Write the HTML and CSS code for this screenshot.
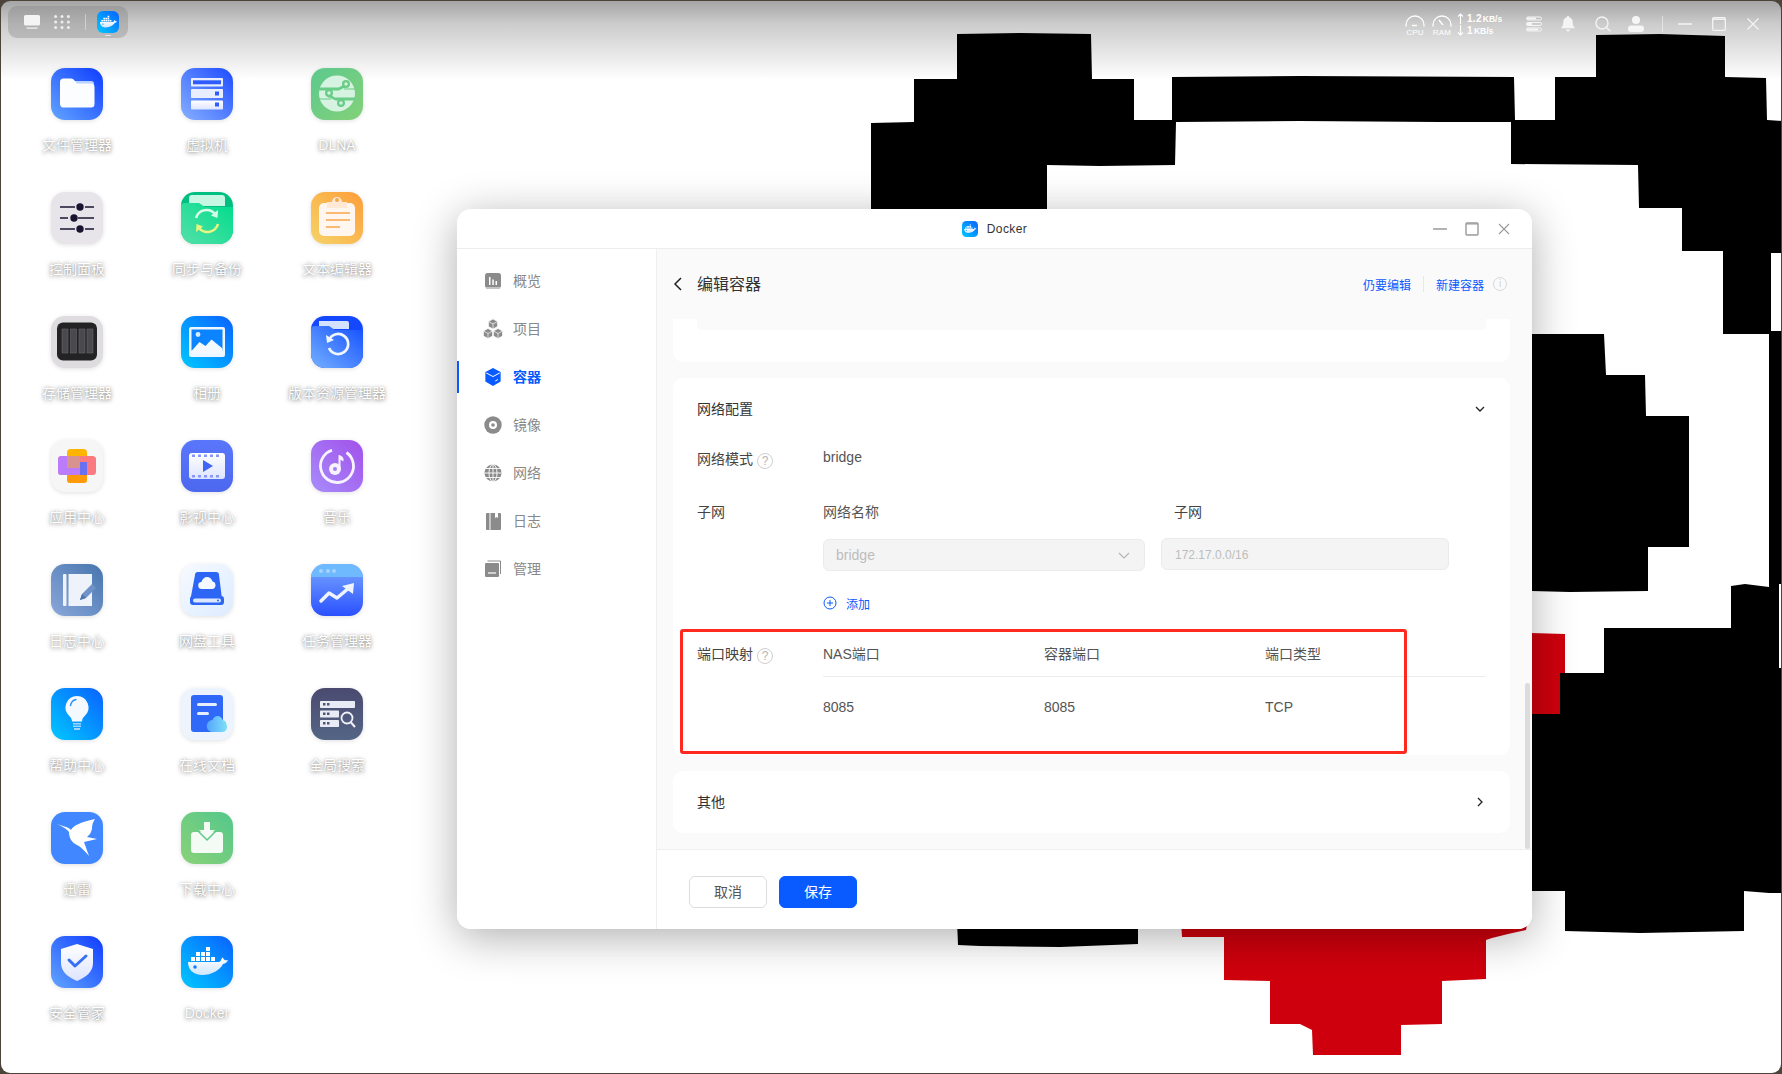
FILE: index.html
```html
<!DOCTYPE html>
<html lang="zh-CN">
<head>
<meta charset="utf-8">
<title>Docker</title>
<link rel="stylesheet" href="styles.css">
</head>
<body>
<svg class="defs" aria-hidden="true">
  <defs>
    <linearGradient id="gFile" x1="0" y1="1" x2="1" y2="0"><stop offset="0" stop-color="#62a5ff"/><stop offset="1" stop-color="#0f3cff"/></linearGradient>
    <linearGradient id="gVm" x1="0" y1="1" x2="1" y2="0"><stop offset="0" stop-color="#86b0ff"/><stop offset="1" stop-color="#1e4cff"/></linearGradient>
    <linearGradient id="gGreen" x1="0" y1="0" x2="1" y2="1"><stop offset="0" stop-color="#5cc98e"/><stop offset="1" stop-color="#84d178"/></linearGradient>
    <linearGradient id="gGreen2" x1="1" y1="0" x2="0" y2="1"><stop offset="0" stop-color="#54c78c"/><stop offset="1" stop-color="#8ad277"/></linearGradient>
    <linearGradient id="gSync" x1="0" y1="1" x2="1" y2="0"><stop offset="0" stop-color="#55e0a8"/><stop offset="1" stop-color="#00dc8c"/></linearGradient>
    <linearGradient id="gOrange" x1="0" y1="1" x2="1" y2="0"><stop offset="0" stop-color="#f5d468"/><stop offset="1" stop-color="#fd9e3a"/></linearGradient>
    <linearGradient id="gPhoto" x1="0" y1="1" x2="1" y2="0"><stop offset="0" stop-color="#00c8ff"/><stop offset="1" stop-color="#0a62ff"/></linearGradient>
    <linearGradient id="gVer" x1="0" y1="1" x2="1" y2="0"><stop offset="0" stop-color="#74b0ff"/><stop offset="1" stop-color="#1650ff"/></linearGradient>
    <linearGradient id="gMovie" x1="0" y1="0" x2="0" y2="1"><stop offset="0" stop-color="#5a76fb"/><stop offset="1" stop-color="#4c68ef"/></linearGradient>
    <linearGradient id="gMusic" x1="1" y1="0" x2="0" y2="1"><stop offset="0" stop-color="#a251ea"/><stop offset="1" stop-color="#a78cfb"/></linearGradient>
    <linearGradient id="gLog" x1="0" y1="1" x2="1" y2="0"><stop offset="0" stop-color="#8aa7da"/><stop offset="1" stop-color="#4775ae"/></linearGradient>
    <linearGradient id="gDisk" x1="0" y1="0" x2="1" y2="1"><stop offset="0" stop-color="#f7faff"/><stop offset="1" stop-color="#dcecff"/></linearGradient>
    <linearGradient id="gTask" x1="0" y1="0" x2="0" y2="1"><stop offset="0" stop-color="#79a8ff"/><stop offset="1" stop-color="#2a50ff"/></linearGradient>
    <linearGradient id="gSearch" x1="0" y1="0" x2="0" y2="1"><stop offset="0" stop-color="#4b4a70"/><stop offset="1" stop-color="#546585"/></linearGradient>
    <linearGradient id="gPaper" x1="0" y1="0" x2="0" y2="1"><stop offset="0" stop-color="#ffffff"/><stop offset="1" stop-color="#dde4ff"/></linearGradient>
    <linearGradient id="gWhale" x1="0" y1="0" x2="0" y2="1"><stop offset="0" stop-color="#ffffff"/><stop offset="1" stop-color="#cfe6ff"/></linearGradient>
    <linearGradient id="gCloud" x1="0" y1="0" x2="1" y2="0"><stop offset="0" stop-color="#56a6ff"/><stop offset="1" stop-color="#7fe0f5"/></linearGradient>
    <symbol id="docker" viewBox="0 0 52 52">
      <rect width="52" height="52" rx="14" fill="url(#gPhoto)"/>
      <path d="M7 26h30c1 0 2-.4 2.600-1 .6-2 1.400-3.400 2.400-3.600.4 1.300 1 2.200 2 2.600 1 .3 2 .2 3 0-.8 2.400-2.600 3.700-5 4C39 34 31 39 21 39 13 39 7 34 7 26z" fill="url(#gWhale)"/>
      <circle cx="14" cy="31" r="1.700" fill="#0a7bff"/>
      <path d="M10 21h4v4h-4zM15 21h4v4h-4zM20 21h4v4h-4zM25 21h4v4h-4zM30 21h4v4h-4zM15 16h4v4h-4zM20 16h4v4h-4zM25 16h4v4h-4zM25 11h4v4h-4z" fill="#fff"/>
    </symbol>
  </defs>
</svg>

<main class="desktop">
  <svg class="wallpaper" viewBox="0 0 1782 1074" aria-hidden="true">
    <path class="ink" d="M957 34 1020 33 1091 34 1092 79 1134 79 1134 120 1172 120 1172 77 1300 76 1514 77 1515 120 1555 120 1555 77 1596 77 1596 35 1660 34 1725 36 1725 77 1766 78 1767 120 1782 121 1782 893 1769 893 1769 334 1723 334 1723 251 1682 251 1682 208 1639 208 1638 165 1511 164 1511 122 1440 122 1300 121 1176 122 1175 165 1100 166 1047 165 1047 300 871 300 871 123 914 122 914 79 957 79Z"/>
    <path class="ink" d="M1500 334 1604 334 1606 375 1645 375 1646 416 1689 416 1689 547 1648 547 1648 591 1570 592 1500 590Z"/>
    <path class="ink" d="M1604 630 1604 628 1731 628 1731 586 1745 584 1769 587 1769 893 1744 891 1744 931 1640 933 1565 931 1565 891 1500 891 1500 673 1565 673 1604 673Z"/>
    <path class="paper" d="M1771 253H1782V331H1771Z"/>
    <path class="paper" d="M1779 584H1782V668H1779Z"/>
    <path class="red" d="M1500 632 1565 634 1565 673 1560 673 1560 714 1500 714Z"/>
    <path class="ink" d="M957 920H1138V944L1060 947 980 946 958 945Z"/>
    <path class="red" d="M1181 920H1528L1526 930 1508 934 1492 938 1486 940 1486 979 1442 981 1442 1024 1401 1025 1401 1055H1313L1312 1030 1300 1024H1270V981L1224 980 1224 937 1182 937Z"/>
  </svg>
  <div class="shade"></div>

  <header class="topbar">
    <nav class="launcher">
      <svg class="launch-ico" viewBox="0 0 16 14"><rect x="0" y="0" width="16" height="10.500" rx="1.500" fill="#f4f4f4"/><rect x="2.500" y="12.500" width="11" height="1.200" fill="#f4f4f4"/></svg>
      <svg class="launch-ico launch-dots" viewBox="0 0 16 14"><g fill="#ededed"><circle cx="1.600" cy="1.600" r="1.500"/><circle cx="8" cy="1.600" r="1.500"/><circle cx="14.400" cy="1.600" r="1.500"/><circle cx="1.600" cy="7" r="1.500"/><circle cx="8" cy="7" r="1.500"/><circle cx="14.400" cy="7" r="1.500"/><circle cx="1.600" cy="12.400" r="1.500"/><circle cx="8" cy="12.400" r="1.500"/><circle cx="14.400" cy="12.400" r="1.500"/></g></svg>
      <span class="launch-sep"></span>
      <span class="launch-app"><svg class="launch-docker"><use href="#docker"/></svg><i class="launch-dash"></i></span>
    </nav>
    <div class="tray">
      <div class="gauge">
        <svg viewBox="0 0 20 12"><path d="M1 11.500V10a9 9 0 0 1 18 0v1.500" fill="none" stroke="#fff" stroke-width="1.300"/><path d="M7 10.500h5" stroke="#fff" stroke-width="1.400"/></svg>
        <span>CPU</span>
      </div>
      <div class="gauge gauge-ram">
        <svg viewBox="0 0 20 12"><path d="M1 11.500V10a9 9 0 0 1 18 0v1.500" fill="none" stroke="#fff" stroke-width="1.300"/><path d="M7 5l4 5" stroke="#fff" stroke-width="1.400"/></svg>
        <span>RAM</span>
      </div>
      <div class="net">
        <div class="net-row"><svg class="net-arrow" viewBox="0 0 7 11"><path d="M3.500 11V1M1 3.500l2.500-2.500L6 3.500" fill="none" stroke="#fff" stroke-width="1.100"/></svg><b>1.2</b><small>KB/s</small></div>
        <div class="net-row"><svg class="net-arrow" viewBox="0 0 7 11"><path d="M3.500 0v10M1 7.500l2.500 2.500L6 7.500" fill="none" stroke="#fff" stroke-width="1.100"/></svg><b>1</b><small>KB/s</small></div>
      </div>
      <svg class="tray-ico t-list" viewBox="0 0 16 16"><g fill="none" stroke="#f4f4f4" stroke-width="1"><rect x=".5" y="1" width="15" height="3" rx="1.500"/><rect x=".5" y="6.500" width="15" height="3" rx="1.500"/><rect x=".5" y="12" width="15" height="3" rx="1.500"/></g><path d="M1 1.500h9v2H1zM1 7h5v2H1zM1 12.500h11v2H1z" fill="#f4f4f4"/></svg>
      <svg class="tray-ico t-bell" viewBox="0 0 14 16"><path d="M7 0c.7 0 1.100.5 1.200 1.200C10.500 1.800 11.700 3.700 11.700 6.200c0 3 .8 4.500 2.300 6H0c1.500-1.500 2.300-3 2.300-6C2.300 3.700 3.500 1.800 5.800 1.200 5.900.5 6.300 0 7 0zM5 13.500h4c-.2 1.200-1 2-2 2s-1.800-.8-2-2z" fill="#f4f4f4"/></svg>
      <svg class="tray-ico t-search" viewBox="0 0 16 16"><circle cx="7" cy="7" r="6" fill="none" stroke="#f4f4f4" stroke-width="1.400"/><path d="M11.500 11.500l3.800 3.800" stroke="#f4f4f4" stroke-width="1.400"/></svg>
      <svg class="tray-ico t-user" viewBox="0 0 16 16"><circle cx="8" cy="4" r="4" fill="#f6f6f6"/><rect x="0" y="9.500" width="16" height="6.500" rx="3.200" fill="#f6f6f6"/></svg>
      <span class="tray-sep"></span>
      <svg class="tray-ico t-min" viewBox="0 0 14 14"><path d="M0 7h14" stroke="#f4f4f4" stroke-width="1.500"/></svg>
      <svg class="tray-ico t-max" viewBox="0 0 14 14"><rect x=".7" y=".7" width="12.600" height="12.600" rx="1" fill="none" stroke="#f4f4f4" stroke-width="1.300"/><path d="M.7 2.200h12.600" stroke="#f4f4f4" stroke-width="1.500"/></svg>
      <svg class="tray-ico t-close" viewBox="0 0 12 12"><path d="M.5.500l11 11M11.500.500l-11 11" stroke="#f4f4f4" stroke-width="1.200"/></svg>
    </div>
  </header>

  <section class="apps">
    <div class="app">
      <svg class="app-ico" viewBox="0 0 52 52"><rect width="52" height="52" rx="14" fill="url(#gFile)"/><path d="M24 13h16a3 3 0 0 1 3 3v6H24z" fill="#b9d2ff"/><path d="M9 14a3.500 3.500 0 0 1 3.500-3.500h7.500c1.500 0 2.500.8 3.500 2l2.500 3h14a3.500 3.500 0 0 1 3.500 3.500v17a3.500 3.500 0 0 1-3.500 3.500h-27A3.500 3.500 0 0 1 9 36z" fill="#fbfdff"/></svg>
      <span class="app-name">文件管理器</span>
    </div>
    <div class="app">
      <svg class="app-ico" viewBox="0 0 52 52"><rect width="52" height="52" rx="14" fill="url(#gVm)"/><rect x="10" y="10" width="32" height="8.500" rx=".8" fill="#e9eeff"/><rect x="12" y="12.300" width="28" height="4" fill="#2f5cff"/><rect x="10" y="21" width="32" height="9" rx=".8" fill="#e9eeff"/><rect x="34" y="23.500" width="4" height="4" fill="#2f5cff"/><rect x="10" y="32.500" width="32" height="9" rx=".8" fill="url(#gPaper)"/><rect x="34" y="34.500" width="4" height="4" fill="#2f5cff"/></svg>
      <span class="app-name">虚拟机</span>
    </div>
    <div class="app">
      <svg class="app-ico" viewBox="0 0 52 52"><rect width="52" height="52" rx="14" fill="url(#gGreen)"/><circle cx="26" cy="25.500" r="18" fill="#d6f2e0"/><path d="M8 21h19c3 0 4-3 8-3M44 31H25c-3 0-4-3-7-3 0 0-1-3 1-3" fill="none" stroke="#69cc87" stroke-width="2.800"/><path d="M8 31h12M33 21h11" stroke="#69cc87" stroke-width="1.200"/><circle cx="35" cy="16" r="4" fill="#69cc87"/><circle cx="18" cy="25" r="4" fill="#69cc87"/><circle cx="30" cy="35" r="4" fill="#69cc87"/><circle cx="35" cy="16" r="1.700" fill="#d6f2e0"/><circle cx="18" cy="25" r="1.700" fill="#d6f2e0"/><circle cx="30" cy="35" r="1.700" fill="#d6f2e0"/></svg>
      <span class="app-name">DLNA</span>
    </div>

    <div class="app">
      <svg class="app-ico" viewBox="0 0 52 52"><rect width="52" height="52" rx="14" fill="#e7e5ea"/><g stroke="#1a1430" stroke-width="1.600"><path d="M9 15h15M34 15h9M9 26h8M27 26h16M9 37h15M34 37h9"/></g><g fill="#1a1430"><circle cx="29" cy="15" r="3.700"/><circle cx="23" cy="26" r="3.700"/><circle cx="29" cy="37" r="3.700"/></g></svg>
      <span class="app-name">控制面板</span>
    </div>
    <div class="app">
      <svg class="app-ico" viewBox="0 0 52 52"><rect width="52" height="52" rx="14" fill="#00bf80"/><path d="M8 6a3 3 0 0 1 3-3h30a3 3 0 0 1 3 3v8H8z" fill="#c6f7e2"/><path d="M0 15a4 4 0 0 1 4-4h14l6 4h28v23a14 14 0 0 1-14 14H14A14 14 0 0 1 0 38z" fill="url(#gSync)"/><path d="M15 26a11 11 0 0 1 19-4" fill="none" stroke="#d7fbe9" stroke-width="2.600"/><path d="M37 18l-.5 8-6.500-2.500z" fill="#d7fbe9"/><path d="M37 32a11 11 0 0 1-19 4" fill="none" stroke="#eaf57f" stroke-width="2.600"/><path d="M15 40l.5-8 6.500 2.500z" fill="#eaf57f"/></svg>
      <span class="app-name">同步与备份</span>
    </div>
    <div class="app">
      <svg class="app-ico" viewBox="0 0 52 52"><rect width="52" height="52" rx="14" fill="url(#gOrange)"/><rect x="8" y="11" width="36" height="33" rx="5" fill="#fff7ef"/><path d="M16 6h5a5 5 0 0 1 10 0h5v6H16z" fill="#ffe9d4" transform="translate(0 4)"/><circle cx="26" cy="8" r="2" fill="#f9a64b"/><g stroke="#f9a64b" stroke-width="1.700"><path d="M15 21h24M15 28h24M15 35h14"/></g></svg>
      <span class="app-name">文本编辑器</span>
    </div>

    <div class="app">
      <svg class="app-ico" viewBox="0 0 52 52"><rect width="52" height="52" rx="14" fill="#dedcdf"/><rect x="6" y="6.500" width="40" height="38" rx="6" fill="#232326"/><g fill="#4a4a4e" stroke="#66666a" stroke-width=".6"><rect x="11" y="13" width="6" height="24"/><rect x="19.500" y="13" width="6" height="24"/><rect x="28" y="13" width="6" height="24"/><rect x="36" y="13" width="6" height="24"/></g></svg>
      <span class="app-name">存储管理器</span>
    </div>
    <div class="app">
      <svg class="app-ico" viewBox="0 0 52 52"><rect width="52" height="52" rx="14" fill="url(#gPhoto)"/><rect x="8" y="11" width="36" height="30" rx="2" fill="#eef6ff"/><rect x="10.500" y="13.500" width="31" height="21" fill="#0d84ff"/><circle cx="17" cy="18.500" r="2.400" fill="#dcecff"/><path d="M10.500 35l8-9 6 4 6-6.500 11 9v5h-31z" fill="#f4f9ff"/></svg>
      <span class="app-name">相册</span>
    </div>
    <div class="app">
      <svg class="app-ico" viewBox="0 0 52 52"><rect width="52" height="52" rx="14" fill="#1448ff"/><path d="M8 5h28a2 2 0 0 1 2 2v6H8z" fill="#d5e2ff"/><path d="M0 14a4 4 0 0 1 4-4h14l6 4h28v24a14 14 0 0 1-14 14H14A14 14 0 0 1 0 38z" fill="url(#gVer)"/><path d="M18 24a10 10 0 1 1 0 8" fill="none" stroke="#f2f7ff" stroke-width="2.700"/><path d="M15 19l1 8 7-3z" fill="#f2f7ff"/></svg>
      <span class="app-name">版本资源管理器</span>
    </div>

    <div class="app">
      <svg class="app-ico" viewBox="0 0 52 52"><rect width="52" height="52" rx="14" fill="#f6f6f7"/><rect x="16" y="9" width="20" height="34" rx="3.500" fill="#ffb400"/><rect x="16" y="30" width="20" height="13" rx="3.500" fill="#ff9a0a"/><rect x="7" y="16" width="38" height="19" rx="3.500" fill="#fb7a7f"/><rect x="7" y="16" width="22" height="19" rx="3.500" fill="#ba7cfb"/><rect x="16" y="16" width="13" height="12" fill="#d8938f"/><rect x="29" y="22" width="7" height="13" fill="#6a71f0"/></svg>
      <span class="app-name">应用中心</span>
    </div>
    <div class="app">
      <svg class="app-ico" viewBox="0 0 52 52"><rect width="52" height="52" rx="14" fill="url(#gMovie)"/><rect x="8" y="13" width="36" height="26" rx="3" fill="url(#gPaper)"/><g fill="#8a97f5"><rect x="11" y="14.500" width="3" height="2.500"/><rect x="17" y="14.500" width="3" height="2.500"/><rect x="23" y="14.500" width="3" height="2.500"/><rect x="29" y="14.500" width="3" height="2.500"/><rect x="35" y="14.500" width="3" height="2.500"/><rect x="11" y="35" width="3" height="2.500"/><rect x="17" y="35" width="3" height="2.500"/><rect x="23" y="35" width="3" height="2.500"/><rect x="29" y="35" width="3" height="2.500"/><rect x="35" y="35" width="3" height="2.500"/></g><path d="M22 20l10 6-10 6z" fill="#3f66f5"/></svg>
      <span class="app-name">影视中心</span>
    </div>
    <div class="app">
      <svg class="app-ico" viewBox="0 0 52 52"><rect width="52" height="52" rx="14" fill="url(#gMusic)"/><circle cx="26" cy="26" r="16.500" fill="none" stroke="#f7f2ff" stroke-width="2.800" stroke-dasharray="88 16" transform="rotate(-55 26 26)"/><circle cx="24" cy="29" r="6" fill="#f7f2ff"/><path d="M27.500 29V15c2 0 4 1.500 5 3.500v3c-1.500-1-2.500-1.500-3-1.500v9z" fill="#f7f2ff"/><circle cx="24" cy="29" r="2" fill="#a77df1"/></svg>
      <span class="app-name">音乐</span>
    </div>

    <div class="app">
      <svg class="app-ico" viewBox="0 0 52 52"><rect width="52" height="52" rx="14" fill="url(#gLog)"/><rect x="12" y="10" width="3.500" height="32" rx="1" fill="#eef2fb"/><path d="M17.500 10H41v32H17.500z" fill="#eef2fb"/><path d="M29 36l2-6 10-10 4 4-10 10z" fill="#6f93c8"/><path d="M29 36l2-6 4 4z" fill="#4c74ad"/></svg>
      <span class="app-name">日志中心</span>
    </div>
    <div class="app">
      <svg class="app-ico" viewBox="0 0 52 52"><rect width="52" height="52" rx="14" fill="url(#gDisk)"/><path d="M14 11a3 3 0 0 1 3-3h18a3 3 0 0 1 3 3l3 24H9.500z" fill="#2d66f5"/><rect x="9" y="32" width="34" height="9" rx="3" fill="#2d66f5"/><rect x="12" y="34.500" width="28" height="4" rx="2" fill="#dbe7ff"/><circle cx="37" cy="36.500" r="1" fill="#2d66f5"/><path d="M21 25a3.500 3.500 0 0 1-.5-7c.5-3 3-5 5.500-5s5 2 5.500 4.500a3.800 3.800 0 0 1-.5 7.500z" fill="#f4f8ff"/></svg>
      <span class="app-name">网盘工具</span>
    </div>
    <div class="app">
      <svg class="app-ico" viewBox="0 0 52 52"><rect width="52" height="52" rx="14" fill="url(#gTask)"/><path d="M14 0h24a14 14 0 0 1 14 13H0A14 14 0 0 1 14 0z" fill="#6fb9ff"/><g fill="#a6d3ff"><circle cx="10" cy="7" r="2"/><circle cx="17" cy="7" r="2"/><circle cx="23" cy="7" r="2"/></g><path d="M10 37l8-8 8 5 13-11" fill="none" stroke="#eef3ff" stroke-width="3.500" stroke-linecap="round" stroke-linejoin="round"/><path d="M31 22l12-3-1 11z" fill="#eef3ff"/></svg>
      <span class="app-name">任务管理器</span>
    </div>

    <div class="app">
      <svg class="app-ico" viewBox="0 0 52 52"><rect width="52" height="52" rx="14" fill="url(#gPhoto)"/><path d="M26 8a11.500 11.500 0 0 1 7.500 20.200c-1.500 1.500-2.500 2.800-2.500 5.300H21c0-2.500-1-3.800-2.500-5.300A11.500 11.500 0 0 1 26 8z" fill="#f4f9ff"/><path d="M19.500 17.500c.5-3 2.500-5.300 5.500-6" fill="none" stroke="#2a8cff" stroke-width="1.400" stroke-linecap="round"/><g fill="#9fd4ff"><rect x="22" y="35" width="8" height="1.500"/><rect x="22" y="37.500" width="8" height="1.500"/><rect x="23" y="40" width="6" height="2"/></g></svg>
      <span class="app-name">帮助中心</span>
    </div>
    <div class="app">
      <svg class="app-ico" viewBox="0 0 52 52"><rect width="52" height="52" rx="14" fill="#eef4fe"/><rect x="10" y="7" width="32" height="37" rx="3" fill="#3068f8"/><rect x="16" y="15" width="20" height="3" rx="1.500" fill="#e7efff"/><rect x="16" y="24" width="12" height="3" rx="1.500" fill="#e7efff"/><path d="M32 44a6 6 0 0 1-.5-12c.8-2.500 3-4 5-4 2.500 0 4.500 1.700 5 4a5 5 0 0 1 4 4.500 5 5 0 0 1-5 7.500z" fill="url(#gCloud)"/></svg>
      <span class="app-name">在线文档</span>
    </div>
    <div class="app">
      <svg class="app-ico" viewBox="0 0 52 52"><rect width="52" height="52" rx="14" fill="url(#gSearch)"/><rect x="9" y="13" width="35" height="7" rx=".8" fill="#e9ecf4"/><rect x="9" y="22.500" width="19" height="7" rx=".8" fill="#e9ecf4"/><rect x="9" y="32" width="19" height="7" rx=".8" fill="#e9ecf4"/><g fill="#4e5578"><rect x="12" y="15" width="2.500" height="2.500"/><rect x="16" y="15" width="2.500" height="2.500"/><rect x="12" y="24.500" width="2.500" height="2.500"/><rect x="16" y="24.500" width="2.500" height="2.500"/><rect x="12" y="34" width="2.500" height="2.500"/><rect x="16" y="34" width="2.500" height="2.500"/></g><circle cx="36" cy="30" r="5.500" fill="none" stroke="#f0f2f8" stroke-width="1.800"/><path d="M40 34.500l4 4.500" stroke="#f0f2f8" stroke-width="2"/></svg>
      <span class="app-name">全局搜索</span>
    </div>

    <div class="app">
      <svg class="app-ico" viewBox="0 0 52 52"><rect width="52" height="52" rx="14" fill="#4187ff"/><path d="M6 12l9 3c2 .6 3 1 5 3 2-4 9-8 24-11-2 3-3 6-3 9 0 2-1 4-2 6-1 1-2 2-3 3l10 2-13 3 5 14c-4-5-8-9-12-11-5-2-8-7-8-13-2-3-6-5-12-8z" fill="#fff"/></svg>
      <span class="app-name">迅雷</span>
    </div>
    <div class="app">
      <svg class="app-ico" viewBox="0 0 52 52"><rect width="52" height="52" rx="14" fill="url(#gGreen2)"/><path d="M13 20h9l4 4 4-4h9a3 3 0 0 1 3 3v15a3 3 0 0 1-3 3H13a3 3 0 0 1-3-3V23a3 3 0 0 1 3-3z" fill="#f3fbf4"/><path d="M23 10h6v8h5l-8 8-8-8h5z" fill="#f3fbf4"/><path d="M17 19l9 9 9-9" fill="none" stroke="#5fc98a" stroke-width="1.500"/></svg>
      <span class="app-name">下载中心</span>
    </div>
    <div class="app app-spacer"></div>

    <div class="app">
      <svg class="app-ico" viewBox="0 0 52 52"><rect width="52" height="52" rx="14" fill="url(#gFile)"/><path d="M26 8l16 5v14c0 9-7 14-16 18-9-4-16-9-16-18V13z" fill="url(#gPaper)"/><path d="M18 24l6 6 11-10" fill="none" stroke="#3670f5" stroke-width="3" stroke-linecap="round" stroke-linejoin="round"/></svg>
      <span class="app-name">安全管家</span>
    </div>
    <div class="app">
      <svg class="app-ico"><use href="#docker"/></svg>
      <span class="app-name">Docker</span>
    </div>
  </section>

  <article class="window">
    <header class="win-head">
      <svg class="win-logo"><use href="#docker"/></svg>
      <span class="win-title">Docker</span>
      <div class="win-ctrl">
        <svg viewBox="0 0 14 14"><path d="M0 7h14" stroke="#9a9a9a" stroke-width="1.300"/></svg>
        <svg viewBox="0 0 14 14"><rect x="1" y="1" width="12" height="12" rx="1" fill="none" stroke="#999" stroke-width="1.400"/><path d="M1 2h12" stroke="#999" stroke-width="1"/></svg>
        <svg viewBox="0 0 14 14"><path d="M2 2l10 10M12 2L2 12" stroke="#9a9a9a" stroke-width="1.100"/></svg>
      </div>
    </header>
    <div class="win-body">
      <aside class="side">
        <a class="nav">
          <svg class="nav-ico" viewBox="0 0 18 18"><rect x="1" y="1" width="16" height="15" rx="2.500" fill="#8b8b8b"/><rect x="2" y="15" width="14" height="2" fill="#c4c4c4"/><path d="M5 5h1.500v8H5zM8.300 7.500h1.500V13H8.300zM11.500 9H13v4h-1.500z" fill="#fff"/></svg>
          <span class="nav-text">概览</span>
        </a>
        <a class="nav">
          <svg class="nav-ico nav-ico-wide" viewBox="0 0 20 20"><g fill="#8b8b8b" stroke="#fff" stroke-width=".6"><path d="M10 0l4.500 2.500v5L10 10 5.500 7.500v-5z"/><path d="M5 9.500l4.500 2.500v5L5 19.500.5 17v-5z"/><path d="M15 9.500l4.500 2.500v5L15 19.500 10.500 17v-5z"/></g><path d="M5.500 2.500L10 5l4.500-2.500M10 5v5M.5 12L5 14.500 9.500 12M5 14.500v5M10.500 12l4.500 2.500 4.500-2.500M15 14.500v5" fill="none" stroke="#fff" stroke-width=".7"/></svg>
          <span class="nav-text">项目</span>
        </a>
        <a class="nav nav-on">
          <svg class="nav-ico" viewBox="0 0 18 20"><path d="M9 0l8.500 4.500v10.500L9 20 .5 15V4.500z" fill="#0a5bff"/><path d="M1.500 5.500L9 9.500l7.500-4" fill="none" stroke="#fff" stroke-width="1.100"/><path d="M11.500 14.500l3-1.700" stroke="#fff" stroke-width="1.100"/></svg>
          <span class="nav-text">容器</span>
        </a>
        <a class="nav">
          <svg class="nav-ico" viewBox="0 0 18 18"><circle cx="9" cy="9" r="8.700" fill="#8b8b8b"/><circle cx="9" cy="9" r="4" fill="#fff"/><circle cx="9" cy="9" r="1.800" fill="#8b8b8b"/></svg>
          <span class="nav-text">镜像</span>
        </a>
        <a class="nav">
          <svg class="nav-ico" viewBox="0 0 18 18"><circle cx="9" cy="9" r="8.500" fill="#8b8b8b"/><g fill="none" stroke="#fff" stroke-width=".9"><ellipse cx="9" cy="9" rx="4" ry="8.500"/><path d="M9 .5v17M.5 9h17M2 4.500h14M2 13.500h14"/></g></svg>
          <span class="nav-text">网络</span>
        </a>
        <a class="nav">
          <svg class="nav-ico" viewBox="0 0 18 18"><rect x="2" y="1" width="15" height="17" rx="1" fill="#8b8b8b"/><path d="M6 1v17" stroke="#fff" stroke-width="1"/><path d="M11 1h3v5l-1.500-1L11 6z" fill="#fff"/></svg>
          <span class="nav-text">日志</span>
        </a>
        <a class="nav">
          <svg class="nav-ico" viewBox="0 0 18 18"><rect x="1" y="3" width="14" height="14" rx="1" fill="#8b8b8b"/><path d="M3.500 1h13v13" fill="none" stroke="#8b8b8b" stroke-width="1"/><path d="M4 13h8" stroke="#fff" stroke-width="1.200"/></svg>
          <span class="nav-text">管理</span>
        </a>
      </aside>
      <section class="main">
        <div class="scroller">
          <div class="page-head">
            <svg class="back" viewBox="0 0 10 16"><path d="M8 2L2 8l6 6" fill="none" stroke="#222" stroke-width="1.500"/></svg>
            <h1 class="page-title">编辑容器</h1>
            <div class="head-links">
              <a class="link">仍要编辑</a>
              <i class="link-sep"></i>
              <a class="link">新建容器</a>
              <span class="info">i</span>
            </div>
          </div>

          <div class="card card-stub"><div class="stub-bar"></div></div>

          <div class="card card-net">
            <div class="card-head">
              <span class="lift">网络配置</span>
              <svg class="chev" viewBox="0 0 12 12"><path d="M2 4l4 4 4-4" fill="none" stroke="#222" stroke-width="1.300"/></svg>
            </div>
            <div class="row row-mode">
              <div class="row-label">网络模式 <span class="help">?</span></div>
              <div class="row-value">bridge</div>
            </div>
            <div class="row row-subnet">
              <div class="row-label">子网</div>
              <div class="subnet">
                <div class="subnet-grid">
                  <div class="field-label">网络名称</div>
                  <div class="field-label field-label-2">子网</div>
                  <div class="select">
                    <span>bridge</span>
                    <svg class="chev" viewBox="0 0 12 12"><path d="M1 4l5 5 5-5" fill="none" stroke="#b4b4b4" stroke-width="1.100"/></svg>
                  </div>
                  <div class="input">172.17.0.0/16</div>
                </div>
                <a class="add">
                  <svg class="add-ico" viewBox="0 0 14 14"><circle cx="7" cy="7" r="6" fill="none" stroke="#0a5bff"/><path d="M7 4v6M4 7h6" stroke="#0a5bff"/></svg>
                  <span>添加</span>
                </a>
              </div>
            </div>
            <div class="row row-port">
              <div class="row-label">端口映射 <span class="help">?</span></div>
              <div class="ports">
                <div class="ports-row ports-head"><span>NAS端口</span><span>容器端口</span><span>端口类型</span></div>
                <div class="ports-row"><span>8085</span><span>8085</span><span>TCP</span></div>
              </div>
            </div>
            <div class="annotation"></div>
          </div>

          <div class="card card-other">
            <span class="lift">其他</span>
            <svg class="chev" viewBox="0 0 12 12"><path d="M4 2l4 4-4 4" fill="none" stroke="#222" stroke-width="1.300"/></svg>
          </div>
        </div>
        <div class="scrollbar"></div>
        <footer class="foot">
          <button class="btn">取消</button>
          <button class="btn btn-primary">保存</button>
        </footer>
      </section>
    </div>
  </article>
  <div class="frame"></div>
</main>
</body>
</html>
```

FILE: styles.css
```css
* { box-sizing: border-box; }
html, body { margin: 0; padding: 0; }
body {
  width: 1782px;
  height: 1074px;
  overflow: hidden;
  background: #fff;
  font-family: "Liberation Sans", "Noto Sans CJK SC", sans-serif;
  font-size: 14px;
  color: #333;
}
.defs { position: absolute; width: 0; height: 0; }

.desktop { position: relative; width: 1782px; height: 1074px; overflow: hidden; background: #fff; }
.wallpaper { position: absolute; left: 0; top: 0; width: 1782px; height: 1074px; filter: blur(.5px); }
.ink { fill: #000; }
.paper { fill: #fff; }
.red { fill: #cf000d; }
.shade { position: absolute; left: 0; top: 0; right: 0; height: 80px; background: linear-gradient(rgba(0,0,0,.36), rgba(0,0,0,.2) 30%, rgba(0,0,0,0)); }
.frame { position: absolute; left: 1px; top: 1px; right: 1px; bottom: 1px; border-radius: 9px; box-shadow: 0 0 0 10px #4c4439; pointer-events: none; }

/* top bar */
.topbar { position: relative; height: 48px; display: flex; justify-content: space-between; align-items: flex-start; padding: 6px 23px 0 8px; }
.launcher { width: 120px; height: 32px; border-radius: 9px; background: rgba(120,120,120,.32); display: flex; align-items: center; padding-left: 16px; }
.launch-ico { width: 16px; height: 14px; display: block; }
.launch-dots { margin-left: 14px; }
.launch-sep { width: 1px; height: 16px; background: rgba(255,255,255,.4); margin-left: 15px; }
.launch-app { position: relative; margin-left: 11px; width: 22px; height: 22px; display: block; }
.launch-docker { width: 22px; height: 22px; display: block; }
.launch-dash { position: absolute; left: 8px; bottom: -3px; width: 6px; height: 1px; background: rgba(255,255,255,.6); }

.tray { display: flex; align-items: center; height: 36px; color: #fff; }
.gauge { width: 20px; display: flex; flex-direction: column; align-items: center; margin-top: 4px; }
.gauge svg { width: 20px; height: 12px; display: block; }
.gauge span { font-size: 8px; line-height: 8px; margin-top: 2px; color: #fff; letter-spacing: .2px; }
.gauge-ram { margin-left: 7px; }
.net { width: 59px; margin-left: 5px; margin-top: 1px; }
.net-row { display: flex; align-items: center; height: 12px; line-height: 12px; color: #fff; }
.net-arrow { width: 7px; height: 11px; margin-right: 3px; flex: none; display: block; }
.net-row b { font-size: 10px; letter-spacing: .3px; margin-right: 1px; }
.net-row small { font-size: 8.500px; font-weight: bold; }
.tray-ico { display: block; }
.t-list { width: 16px; height: 16px; margin-left: 10px; }
.t-bell { width: 14px; height: 16px; margin-left: 19px; }
.t-search { width: 16px; height: 16px; margin-left: 20px; }
.t-user { width: 16px; height: 16px; margin-left: 17px; }
.tray-sep { width: 1px; height: 16px; background: rgba(255,255,255,.45); margin-left: 18px; }
.t-min { width: 14px; height: 14px; margin-left: 15px; }
.t-max { width: 14px; height: 14px; margin-left: 20px; }
.t-close { width: 12px; height: 12px; margin-left: 21px; }

/* desktop apps */
.apps { position: relative; display: grid; grid-template-columns: repeat(3, 130px); grid-auto-rows: 124px; margin: 20px 0 0 12px; width: 390px; }
.app { display: flex; flex-direction: column; align-items: center; }
.app-ico { width: 52px; height: 52px; display: block; filter: drop-shadow(0 1px 2px rgba(0,0,0,.12)); }
.app-name { margin-top: 15px; line-height: 20px; font-size: 14px; color: #fff; white-space: nowrap; text-shadow: 0 1px 4px rgba(0,0,0,.5), 0 0 1px rgba(0,0,0,.22); }

/* window */
.window { position: absolute; left: 457px; top: 209px; width: 1075px; height: 720px; background: #fff; border-radius: 14px; box-shadow: 0 8px 44px rgba(0,0,0,.32); display: flex; flex-direction: column; overflow: hidden; }
.win-head { position: relative; height: 40px; flex: none; border-bottom: 1px solid #ededed; display: flex; align-items: center; justify-content: center; }
.win-logo { width: 16px; height: 16px; display: block; margin-right: 9px; }
.win-title { font-size: 12px; color: #333; letter-spacing: .4px; }
.win-ctrl { position: absolute; right: 21px; top: 13px; display: flex; gap: 18px; }
.win-ctrl svg { width: 14px; height: 14px; display: block; }
.win-body { flex: 1; display: flex; min-height: 0; }

.side { width: 200px; flex: none; border-right: 1px solid #efefef; padding-top: 8px; background: #fff; }
.nav { position: relative; height: 48px; display: flex; align-items: center; padding-left: 27px; color: #888; font-size: 14px; }
.nav-ico { width: 18px; height: 18px; margin-right: 11px; flex: none; display: block; }
.nav-ico-wide { width: 20px; height: 20px; margin-left: -1px; margin-right: 10px; }
.nav-text { padding-bottom: 2px; }
.nav-on { color: #0a5bff; font-weight: 500; text-shadow: 0 0 .4px #0a5bff; }
.nav-on::before { content: ""; position: absolute; left: 0; top: 8px; width: 2px; height: 32px; background: #0a5bff; }

.main { position: relative; flex: 1; min-width: 0; display: flex; flex-direction: column; background: #fafafa; }
.scroller { height: 600px; flex: none; padding: 0 22px 0 16px; overflow: hidden; }
.page-head { height: 70px; display: flex; align-items: center; padding: 0 3px 0 0; }
.back { width: 10px; height: 16px; display: block; }
.page-title { margin: 0 0 2px 14px; font-size: 16px; font-weight: 400; color: #333; }
.head-links { margin-left: auto; display: flex; align-items: center; }
.link { font-size: 12px; color: #0a5bff; }
.link-sep { width: 1px; height: 16px; background: #e8e8e8; margin: 0 12px; }
.info { width: 14px; height: 14px; border: 1px solid #d8d8d8; border-radius: 50%; margin-left: 9px; font-size: 10px; line-height: 12px; text-align: center; color: #d0d0d0; font-style: normal; }

.card { background: #fff; border-radius: 10px; }
.card-stub { height: 43px; padding: 0 24px; border-radius: 0 0 10px 10px; }
.stub-bar { height: 11px; background: #fafafa; border-radius: 0 0 4px 4px; }

.card-net { position: relative; height: 377px; margin-top: 16px; padding: 0 24px; }
.card-head { height: 62px; display: flex; align-items: center; justify-content: space-between; color: #333; }
.lift { padding-bottom: 3px; }
.chev { width: 12px; height: 12px; display: block; flex: none; }

.row { display: flex; }
.row-label { width: 126px; flex: none; line-height: 22px; color: #444; display: flex; align-items: center; gap: 3px; height: 22px; }
.help { width: 16px; height: 16px; border: 1px solid #cfcfcf; border-radius: 50%; font-size: 12px; line-height: 14px; text-align: center; color: #b5b5b5; margin-top: 4px; margin-left: 1px; }
.row-mode { margin-top: 8px; height: 53px; }
.row-value { line-height: 22px; margin-top: -2px; color: #555; }
.row-subnet { height: 142px; }
.subnet { flex: 1; }
.subnet-grid { display: grid; grid-template-columns: 322px 288px; column-gap: 16px; }
.field-label { line-height: 22px; height: 38px; color: #555; }
.field-label-2 { padding-left: 13px; color: #444; }
.select { height: 32px; background: #f4f4f4; border: 1px solid #ebebeb; border-radius: 6px; display: flex; align-items: center; justify-content: space-between; padding: 0 14px 0 12px; color: #bdbdbd; font-size: 14px; }
.input { height: 32px; margin-top: -1px; background: #f4f4f4; border: 1px solid #ebebeb; border-radius: 6px; padding-left: 13px; line-height: 32px; font-size: 12px; color: #bdbdbd; }
.add { display: flex; align-items: center; margin-top: 21px; height: 22px; color: #0a5bff; font-size: 12px; }
.add-ico { width: 14px; height: 14px; margin-right: 9px; display: block; }

.ports { width: 663px; flex: none; }
.ports-row { display: grid; grid-template-columns: repeat(3, 1fr); line-height: 22px; color: #555; }
.ports-head { height: 34px; border-bottom: 1px solid #ededed; margin-bottom: 19px; }
.annotation { position: absolute; left: 7px; top: 251px; width: 727px; height: 125px; border: 3px solid #ff2a1f; border-radius: 3px; pointer-events: none; }

.card-other { height: 62px; margin-top: 16px; padding: 0 24px; display: flex; align-items: center; justify-content: space-between; color: #333; }

.scrollbar { position: absolute; right: 2px; bottom: 80px; width: 5px; height: 166px; background: #dcdcdc; border-radius: 3px; }
.foot { flex: 1; background: #fff; border-top: 1px solid #efefef; display: flex; align-items: flex-start; gap: 12px; padding: 26px 0 0 32px; }
.btn { width: 78px; height: 32px; border-radius: 6px; border: 1px solid #dcdcdc; background: #fff; color: #555; font: inherit; font-size: 14px; padding: 0 0 2px; }
.btn-primary { background: #0a5bff; border-color: #0a5bff; color: #fff; }
```
